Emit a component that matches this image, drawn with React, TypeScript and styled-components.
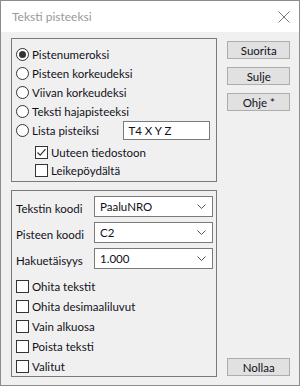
import React from 'react';
import styled, { createGlobalStyle } from 'styled-components';

const GlobalStyle = createGlobalStyle`
  body {
    margin: 0;
    background: #ffffff;
    font-family: Lato, 'Noto Sans', sans-serif;
    font-size: 11.5px;
    font-weight: 400;
    color: #101020;
  }
`;

const Window = styled.div`
  width: 300px;
  height: 386px;
  box-sizing: border-box;
  border: 1px solid #8c8c8c;
  background: #f0f0f0;
  display: flex;
  flex-direction: column;
`;

const TitleBar = styled.div`
  height: 31px;
  flex: none;
  background: #ffffff;
  display: flex;
  align-items: center;
  justify-content: space-between;
  padding: 0 9px 0 11px;
  color: #999999;
  font-size: 12px;
`;

const Body = styled.div`
  flex: 1;
  display: flex;
  gap: 10px;
  padding: 6px 9px 8px 10px;
`;

const LeftColumn = styled.div`
  width: 208px;
  display: flex;
  flex-direction: column;
  gap: 8px;
`;

const GroupBox = styled.div<{ $h: number; $pt: number }>`
  box-sizing: border-box;
  height: ${({ $h }) => $h}px;
  border: 1px solid #7a7a7a;
  padding: ${({ $pt }) => $pt}px 0 0 4px;
  display: flex;
  flex-direction: column;
`;

const OptionRow = styled.label<{ $h: number; $indent?: number }>`
  height: ${({ $h }) => $h}px;
  display: flex;
  align-items: center;
  gap: 3px;
  padding-left: ${({ $indent }) => $indent ?? 0}px;
`;

const Radio = styled.span<{ $on?: boolean }>`
  width: 13px;
  height: 13px;
  box-sizing: border-box;
  border: 1px solid #333;
  border-radius: 50%;
  background: #fff;
  display: flex;
  align-items: center;
  justify-content: center;
  flex: none;
  &::after {
    content: '';
    display: ${({ $on }) => ($on ? 'block' : 'none')};
    width: 7px;
    height: 7px;
    border-radius: 50%;
    background: #333;
  }
`;

const Box = styled.span`
  width: 13px;
  height: 13px;
  box-sizing: border-box;
  border: 1px solid #333;
  background: #fff;
  display: flex;
  align-items: center;
  justify-content: center;
  flex: none;
`;

const TextField = styled.div`
  margin-left: auto;
  margin-right: 6px;
  width: 87px;
  height: 19px;
  box-sizing: border-box;
  border: 1px solid #7a7a7a;
  background: #fff;
  padding-left: 4px;
  display: flex;
  align-items: center;
`;

const SubOptions = styled.div`
  margin-top: 3px;
  display: flex;
  flex-direction: column;
`;

const FieldGrid = styled.div`
  display: grid;
  grid-template-columns: 78px 119px;
  grid-auto-rows: 21px;
  row-gap: 5px;
  align-items: center;
`;

const FieldLabel = styled.span`
  padding-top: 4px;
`;

const Select = styled.div`
  height: 21px;
  box-sizing: border-box;
  border: 1px solid #7a7a7a;
  background: #fff;
  padding: 0 6px 0 5px;
  display: flex;
  align-items: center;
  justify-content: space-between;
`;

const CheckList = styled.div`
  margin-top: 7px;
  display: flex;
  flex-direction: column;
`;

const ButtonColumn = styled.div`
  width: 63px;
  display: flex;
  flex-direction: column;
  gap: 8px;
  padding-top: 3px;
`;

const Button = styled.div<{ $bottom?: boolean }>`
  height: 18px;
  box-sizing: border-box;
  border: 1px solid #adadad;
  background: #e1e1e1;
  display: flex;
  align-items: center;
  justify-content: center;
  margin-top: ${({ $bottom }) => ($bottom ? 'auto' : '0')};
  margin-bottom: ${({ $bottom }) => ($bottom ? '1px' : '0')};
`;

const Check = () => (
  <svg width="11" height="11" viewBox="0 0 11 11">
    <path d="M1.5 5.5 L4.2 8.2 L9.5 2.2" fill="none" stroke="#333" strokeWidth="1.2" />
  </svg>
);

const Chevron = () => (
  <svg width="9" height="5" viewBox="0 0 9 5">
    <path d="M0.5 0.5 L4.5 4.5 L8.5 0.5" fill="none" stroke="#555" strokeWidth="1" />
  </svg>
);

const CloseIcon = () => (
  <svg width="12" height="12" viewBox="0 0 12 12">
    <path d="M0.5 0.5 L11.5 11.5 M11.5 0.5 L0.5 11.5" stroke="#777" strokeWidth="1" />
  </svg>
);

const radios = ['Pistenumeroksi', 'Pisteen korkeudeksi', 'Viivan korkeudeksi', 'Teksti hajapisteeksi'];
const fields = [
  { label: 'Tekstin koodi', value: 'PaaluNRO' },
  { label: 'Pisteen koodi', value: 'C2' },
  { label: 'Hakuetäisyys', value: '1.000' },
];
const options = ['Ohita tekstit', 'Ohita desimaaliluvut', 'Vain alkuosa', 'Poista teksti', 'Valitut'];

export default function App() {
  return (
    <>
      <GlobalStyle />
      <Window>
        <TitleBar>
          <span>Teksti pisteeksi</span>
          <CloseIcon />
        </TitleBar>
        <Body>
          <LeftColumn>
            <GroupBox $h={144} $pt={6}>
              {radios.map((r, i) => (
                <OptionRow key={r} $h={19}>
                  <Radio $on={i === 0} />
                  {r}
                </OptionRow>
              ))}
              <OptionRow $h={19}>
                <Radio />
                Lista pisteiksi
                <TextField>T4 X Y Z</TextField>
              </OptionRow>
              <SubOptions>
                <OptionRow $h={18} $indent={19}>
                  <Box>
                    <Check />
                  </Box>
                  Uuteen tiedostoon
                </OptionRow>
                <OptionRow $h={18} $indent={19}>
                  <Box />
                  Leikepöydältä
                </OptionRow>
              </SubOptions>
            </GroupBox>

            <GroupBox $h={187} $pt={5}>
              <FieldGrid>
                {fields.map((f) => (
                  <React.Fragment key={f.label}>
                    <FieldLabel>{f.label}</FieldLabel>
                    <Select>
                      {f.value}
                      <Chevron />
                    </Select>
                  </React.Fragment>
                ))}
              </FieldGrid>
              <CheckList>
                {options.map((o) => (
                  <OptionRow key={o} $h={20}>
                    <Box />
                    {o}
                  </OptionRow>
                ))}
              </CheckList>
            </GroupBox>
          </LeftColumn>

          <ButtonColumn>
            <Button>Suorita</Button>
            <Button>Sulje</Button>
            <Button>Ohje *</Button>
            <Button $bottom>Nollaa</Button>
          </ButtonColumn>
        </Body>
      </Window>
    </>
  );
}
